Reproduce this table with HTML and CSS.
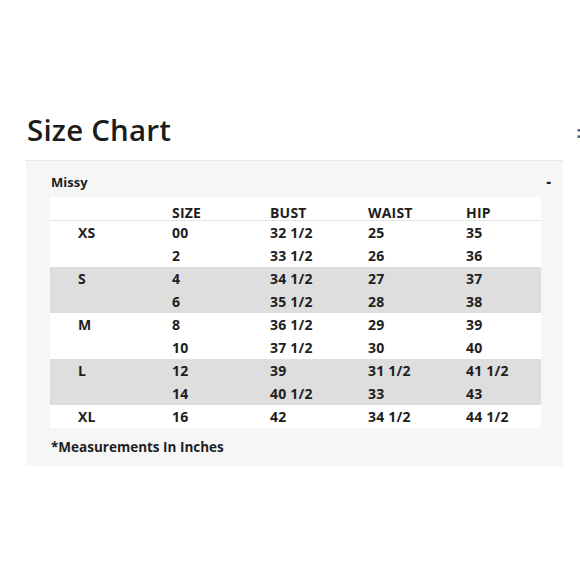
FILE: index.html
```html
<!DOCTYPE html>
<html>
<head>
<meta charset="utf-8">
<link rel="stylesheet" href="styles.css">
</head>
<body>
<div class="page">
  <div class="head">
    <h1 class="title">Size Chart</h1>
    <span class="more">:</span>
  </div>
  <section class="panel">
    <div class="panel-head"><span class="group">Missy</span><span class="toggle">-</span></div>
    <div class="table">
      <div class="row header"><span></span><span>SIZE</span><span>BUST</span><span>WAIST</span><span>HIP</span></div>
      <div class="row"><span>XS</span><span>00</span><span>32 1/2</span><span>25</span><span>35</span></div>
      <div class="row"><span></span><span>2</span><span>33 1/2</span><span>26</span><span>36</span></div>
      <div class="row shade"><span>S</span><span>4</span><span>34 1/2</span><span>27</span><span>37</span></div>
      <div class="row shade"><span></span><span>6</span><span>35 1/2</span><span>28</span><span>38</span></div>
      <div class="row"><span>M</span><span>8</span><span>36 1/2</span><span>29</span><span>39</span></div>
      <div class="row"><span></span><span>10</span><span>37 1/2</span><span>30</span><span>40</span></div>
      <div class="row shade"><span>L</span><span>12</span><span>39</span><span>31 1/2</span><span>41 1/2</span></div>
      <div class="row shade"><span></span><span>14</span><span>40 1/2</span><span>33</span><span>43</span></div>
      <div class="row"><span>XL</span><span>16</span><span>42</span><span>34 1/2</span><span>44 1/2</span></div>
    </div>
    <p class="note">*Measurements In Inches</p>
  </section>
</div>
</body>
</html>
```
FILE: styles.css
```css
html, body {
  margin: 0;
  padding: 0;
  background: #ffffff;
}
body {
  font-family: "Open Sans", "Liberation Sans", sans-serif;
  color: #1e1e1e;
  width: 580px;
  height: 580px;
  overflow: hidden;
}
.page {
  padding-top: 110px;
}
.head {
  display: flex;
  justify-content: space-between;
  align-items: center;
  padding-left: 27px;
  height: 40px;
}
.title {
  margin: 0;
  font-size: 29.5px;
  font-weight: 600;
  line-height: 40px;
  letter-spacing: 0.2px;
  color: #1c1c1c;
}
.more {
  font-size: 16px;
  font-weight: 700;
  color: #555;
  margin-right: -1px;
  margin-top: 4px;
}
.panel {
  margin: 10px 0 0 26px;
  width: 537px;
  background: #f6f6f6;
  border-top: 1px solid #e6e6e6;
  padding: 0 12px 0 24px;
  box-sizing: border-box;
  height: 306px;
}
.panel-head {
  display: flex;
  justify-content: space-between;
  align-items: center;
  height: 36px;
  font-size: 13px;
  font-weight: 700;
}
.panel-head .group {
  padding-top: 6px;
  padding-left: 1px;
}
.panel-head .toggle {
  padding-top: 4px;
  font-size: 14px;
  font-weight: 800;
}
.table {
  background: #ffffff;
  width: 491px;
}
.row {
  display: grid;
  grid-template-columns: 94px 98px 98px 98px 1fr;
  padding-left: 28px;
  height: 23px;
  align-items: center;
  font-size: 14px;
  font-weight: 700;
  letter-spacing: 0.2px;
}
.row.header {
  height: 24px;
  border-bottom: 1px solid #e4e4e4;
  box-sizing: border-box;
  padding-top: 6px;
}
.row.shade {
  background: #dedede;
}
.note {
  margin: 0;
  height: 37px;
  display: flex;
  align-items: center;
  font-size: 13.5px;
  font-weight: 700;
  padding-left: 1px;
}
```
